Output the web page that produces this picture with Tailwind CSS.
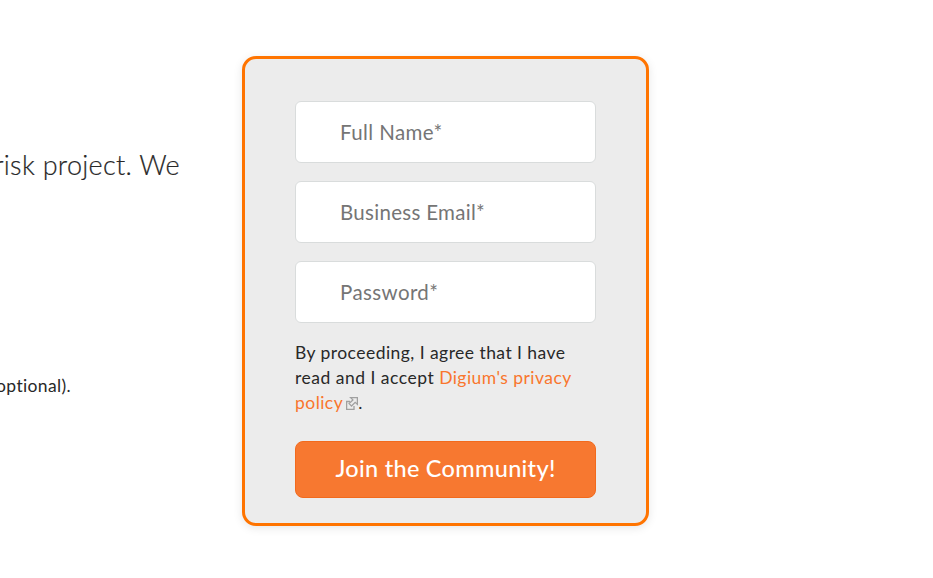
<!DOCTYPE html>
<html lang="en">
<head>
<meta charset="utf-8">
<title>Join the Community</title>
<script src="https://cdn.jsdelivr.net/npm/@tailwindcss/browser@4"></script>
</head>
<body class="bg-white font-['Lato',sans-serif] text-[#282828]">
<main class="flex h-[578px] w-[933px] items-start overflow-hidden pt-14">
  <section class="flex w-[242px] shrink-0 flex-col items-start overflow-hidden pt-[89px]">
    <p class="flex h-10 w-[180px] items-center justify-end whitespace-nowrap text-[27px] font-light tracking-[0.3px] [-webkit-text-stroke:0.2px_#282828]">risk project. We</p>
    <p class="mt-[188px] flex h-[26px] w-[71px] items-center justify-end whitespace-nowrap text-[17.5px] tracking-[0.35px]">optional).</p>
  </section>
  <form class="h-[470px] w-[407px] shrink-0 rounded-[14px] border-3 border-[#ff7400] bg-[#ececec] px-[50px] pt-[42px] shadow-[0_2px_10px_rgba(0,0,0,0.1)]">
    <div class="flex flex-col gap-[18px]">
      <input type="text" placeholder="Full Name*" class="h-[62px] w-full rounded-md border border-[#d9dcdc] bg-white px-11 text-[20.5px] tracking-[0.4px] placeholder:text-[#757575]">
      <input type="text" placeholder="Business Email*" class="h-[62px] w-full rounded-md border border-[#d9dcdc] bg-white px-11 text-[20.5px] tracking-[0.3px] placeholder:text-[#757575]">
      <input type="password" placeholder="Password*" class="h-[62px] w-full rounded-md border border-[#d9dcdc] bg-white px-11 text-[20.5px] tracking-[0.4px] placeholder:text-[#757575]">
    </div>
    <p class="mt-[17px] whitespace-nowrap text-[17.5px] leading-[25px]"><span class="tracking-[0.45px]">By proceeding, I agree that I have</span><br><span class="tracking-[0.5px]">read and I accept </span><a class="tracking-[0.45px] text-[#f9762d]">Digium's privacy<br>policy</a><svg class="ml-[3px] inline-block align-[-1px]" width="12" height="13" viewBox="0 0 12 13" fill="none" stroke="#a0a0a0" stroke-width="1.3"><path d="M4 4.5H.6v7.9h7.4V9"/><path d="M4.6.6h6.8v6.8L9.2 5.3 5.5 9 3.1 6.6l3.8-3.7z" fill="#ececec"/></svg><span>.</span></p>
    <button type="button" class="mt-[26px] block h-[57px] w-full rounded-lg border border-[#f26a1d] bg-[#f77830] pb-0.5 text-center text-[23.5px] font-medium tracking-[0.3px] text-white"><span>Join the Community!</span></button>
  </form>
</main>
</body>
</html>
